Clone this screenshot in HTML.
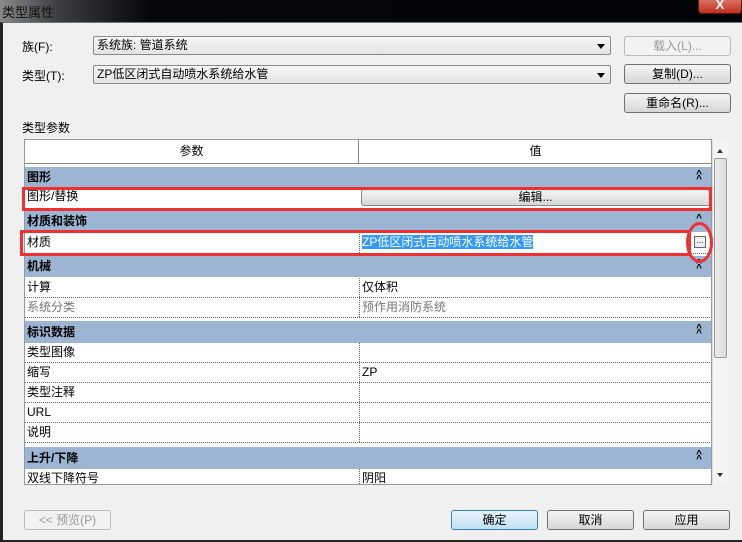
<!DOCTYPE html>
<html><head><meta charset="utf-8"><style>
*{margin:0;padding:0;box-sizing:border-box}
body{width:742px;height:542px;overflow:hidden;position:relative;background:#f0f0f0;font-family:"Liberation Sans","Noto Sans CJK SC",sans-serif;font-size:12px;color:#000}
.a{position:absolute}
.title{left:0;top:0;width:742px;height:22px;background:linear-gradient(90deg,#8a8a8a 0,#3a3c40 60px,#05070d 150px,#020308 100%)}
.title span{position:absolute;left:2px;top:2px;font-size:13px;color:#111}
.close{left:698px;top:-4px;width:44px;height:18px;background:linear-gradient(#e08070,#c0301c);border:1px solid #5a1a10;border-radius:0 0 4px 4px;color:#fff;text-align:center;font-weight:bold;line-height:16px;font-size:13px}
.frame{left:0;top:22px;width:742px;height:520px;border-left:3px solid #222;border-bottom:2px solid #222;border-top:1px solid #777;background:#f0f0f0}
.combo{background:linear-gradient(#f6f6f6,#e4e4e4);border:1px solid #8a8a8a;border-radius:2px;height:19px;padding-left:3px;line-height:17px}
.combo:after{content:"";position:absolute;right:5px;top:7px;border:4px solid transparent;border-top:5px solid #000}
.btn{background:linear-gradient(#f4f4f4 0,#e6e6e6 50%,#d6d6d6 100%);border:1px solid #707070;border-radius:3px;text-align:center;line-height:18px}
.dis{color:#999;border-color:#bbb;background:#f2f2f2}
.grid{left:24px;top:139px;width:688px;height:346px;background:#fff;border:1px solid #999;overflow:hidden}
.hdr{left:0;top:0;width:688px;height:24px;background:#fff;border-bottom:1px solid #888}
.hdr div{position:absolute;top:0;height:23px;line-height:23px;text-align:center}
.grp{position:absolute;left:0;width:687px;background:#9bb5d3;font-weight:bold;padding-left:2px}
.grp i{position:absolute;right:9px;top:5px;font-style:normal;font-size:10px;line-height:5px;width:8px;text-align:center}
.row{position:absolute;left:0;width:687px;height:20px;border-bottom:1px dotted #666;line-height:19px}
.row .k{position:absolute;left:2px}
.row .v{position:absolute;left:334px;top:0;height:19px;border-left:1px dotted #666;padding-left:2px;width:353px}
.sb{left:712px;top:140px;width:16px;height:344px;background:#f4f4f4;border-left:1px solid #ddd}
.red{position:absolute;border:3px solid #f03030}
</style></head><body>
<div class="a title"><span>类型属性</span></div>
<div class="a close">X</div>
<div class="a frame"></div>
<div class="a" style="left:22px;top:38px">族(F):</div>
<div class="a combo" style="left:93px;top:36px;width:518px">系统族: 管道系统</div>
<div class="a" style="left:22px;top:67px">类型(T):</div>
<div class="a combo" style="left:93px;top:65px;width:518px">ZP低区闭式自动喷水系统给水管</div>
<div class="a btn dis" style="left:624px;top:36px;width:107px;height:20px">载入(L)...</div>
<div class="a btn" style="left:624px;top:64px;width:107px;height:20px">复制(D)...</div>
<div class="a btn" style="left:624px;top:93px;width:107px;height:20px">重命名(R)...</div>
<div class="a" style="left:22px;top:119px">类型参数</div>
<div class="a grid">
 <div class="a hdr"><div style="left:0;width:334px;border-right:1px solid #888">参数</div><div style="left:334px;width:353px">值</div></div>
 <div class="grp" style="top:27px;height:20px;line-height:20px">图形<i>^<br>^</i></div>
 <div class="row" style="top:47px;height:22px"><span class="k">图形/替换</span><div class="v" style="border:none;padding:2px 2px 0 2px"><div class="btn" style="height:17px;line-height:15px;border-color:#888">编辑...</div></div></div>
 <div class="grp" style="top:71px;height:21px;line-height:21px">材质和装饰<i>^</i></div>
 <div class="row" style="top:92px;height:22px;line-height:20px"><span class="k">材质</span><div class="v" style="height:21px"><span style="background:#3399ff;color:#fff">ZP低区闭式自动喷水系统给水管</span><div style="position:absolute;right:6px;top:4px;width:12px;height:12px;border:1px solid #666;background:#eee;font-size:8px;line-height:8px;text-align:center">...</div></div></div>
 <div class="grp" style="top:116px;height:21px;line-height:21px">机械<i>^<br>^</i></div>
 <div class="row" style="top:138px"><span class="k">计算</span><div class="v">仅体积</div></div>
 <div class="row" style="top:158px;color:#777"><span class="k">系统分类</span><div class="v">预作用消防系统</div></div>
 <div class="grp" style="top:181px;height:22px;line-height:22px">标识数据<i>^<br>^</i></div>
 <div class="row" style="top:203px"><span class="k">类型图像</span><div class="v"></div></div>
 <div class="row" style="top:223px"><span class="k">缩写</span><div class="v">ZP</div></div>
 <div class="row" style="top:243px"><span class="k">类型注释</span><div class="v"></div></div>
 <div class="row" style="top:263px"><span class="k">URL</span><div class="v"></div></div>
 <div class="row" style="top:283px"><span class="k">说明</span><div class="v"></div></div>
 <div class="grp" style="top:307px;height:22px;line-height:22px">上升/下降<i>^<br>^</i></div>
 <div class="row" style="top:329px;border:none"><span class="k">双线下降符号</span><div class="v">阴阳</div></div>
</div>
<div class="a sb"><div style="position:absolute;left:4px;top:6px;border:3px solid transparent;border-bottom:4px solid #333"></div><div style="position:absolute;left:1px;top:18px;width:13px;height:200px;background:linear-gradient(90deg,#eaeaea,#dcdcdc);border:1px solid #999;border-radius:2px"></div><div style="position:absolute;left:4px;bottom:4px;border:3px solid transparent;border-top:4px solid #333"></div></div>
<div class="red" style="left:22px;top:187px;width:690px;height:24px"></div>
<div class="red" style="left:20px;top:230px;width:671px;height:26px"></div>
<div class="a" style="left:686px;top:222px;width:27px;height:41px;border:3px solid #f03030;border-radius:50%"></div>
<div class="a btn dis" style="left:24px;top:510px;width:87px;height:20px">&lt;&lt; 预览(P)</div>
<div class="a btn" style="left:451px;top:510px;width:87px;height:20px;background:linear-gradient(#e8f4fb,#bfe0f3);border-color:#3c7fb1">确定</div>
<div class="a btn" style="left:547px;top:510px;width:87px;height:20px">取消</div>
<div class="a btn" style="left:643px;top:510px;width:87px;height:20px">应用</div>
</body></html>
